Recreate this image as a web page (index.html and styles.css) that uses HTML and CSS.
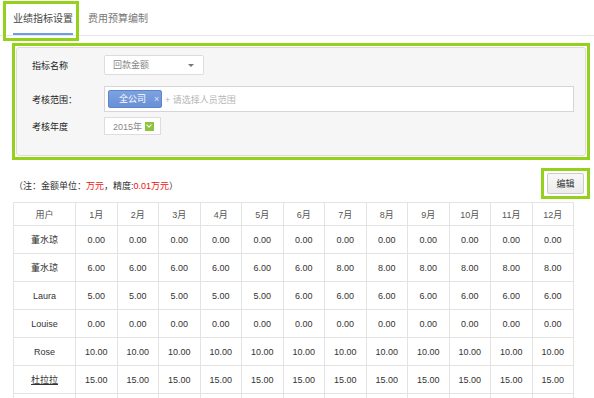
FILE: index.html
```html
<!DOCTYPE html>
<html lang="zh-CN">
<head>
    <meta charset="UTF-8">
    <title>业绩指标设置</title>
    <link rel="stylesheet" href="styles.css">
</head>
<body>
<div class="tabs">
    <span class="tab active">业绩指标设置</span>
    <span class="tab">费用预算编制</span>
    <div class="mark"></div>
</div>
<div class="filter">
    <div class="panel">
        <div class="row row1">
            <span class="label">指标名称</span>
            <div class="select">回款金额<i class="caret"></i></div>
        </div>
        <div class="row row2">
            <span class="label">考核范围：</span>
            <div class="tags">
                <span class="tag">全公司<i>×</i></span>
                <span class="holder">+ 请选择人员范围</span>
            </div>
        </div>
        <div class="row row3">
            <span class="label">考核年度</span>
            <div class="year">2015年<i class="down"></i></div>
        </div>
    </div>
</div>
<div class="bar">
    <p class="note">（注：金额单位：<em>万元</em>，精度:<em>0.01万元</em>）</p>
    <div class="editbox"><button class="btn">编辑</button></div>
</div>
<table>
    <tr class="head">
        <td>用户</td><td>1月</td><td>2月</td><td>3月</td><td>4月</td><td>5月</td><td>6月</td><td>7月</td><td>8月</td><td>9月</td><td>10月</td><td>11月</td><td>12月</td>
    </tr>
    <tr>
        <td>董水琼</td><td>0.00</td><td>0.00</td><td>0.00</td><td>0.00</td><td>0.00</td><td>0.00</td><td>0.00</td><td>0.00</td><td>0.00</td><td>0.00</td><td>0.00</td><td>0.00</td>
    </tr>
    <tr>
        <td>董水琼</td><td>6.00</td><td>6.00</td><td>6.00</td><td>6.00</td><td>6.00</td><td>6.00</td><td>8.00</td><td>8.00</td><td>8.00</td><td>8.00</td><td>8.00</td><td>8.00</td>
    </tr>
    <tr>
        <td>Laura</td><td>5.00</td><td>5.00</td><td>5.00</td><td>5.00</td><td>5.00</td><td>6.00</td><td>6.00</td><td>6.00</td><td>6.00</td><td>6.00</td><td>6.00</td><td>6.00</td>
    </tr>
    <tr>
        <td>Louise</td><td>0.00</td><td>0.00</td><td>0.00</td><td>0.00</td><td>0.00</td><td>0.00</td><td>0.00</td><td>0.00</td><td>0.00</td><td>0.00</td><td>0.00</td><td>0.00</td>
    </tr>
    <tr>
        <td>Rose</td><td>10.00</td><td>10.00</td><td>10.00</td><td>10.00</td><td>10.00</td><td>10.00</td><td>10.00</td><td>10.00</td><td>10.00</td><td>10.00</td><td>10.00</td><td>10.00</td>
    </tr>
    <tr>
        <td><a href="#">杜拉拉</a></td><td>15.00</td><td>15.00</td><td>15.00</td><td>15.00</td><td>15.00</td><td>15.00</td><td>15.00</td><td>15.00</td><td>15.00</td><td>15.00</td><td>15.00</td><td>15.00</td>
    </tr>
    <tr>
        <td></td><td></td><td></td><td></td><td></td><td></td><td></td><td></td><td></td><td></td><td></td><td></td><td></td>
    </tr>
</table>
</body>
</html>
```
FILE: styles.css
```css
body{
    margin: 0;
    width: 594px;
    font-family: "Liberation Sans", "Noto Sans CJK SC", sans-serif;
    font-size: 9px;
    color: #333333;
    background-color: #ffffff;
}
.tabs{
    position: relative;
    display: flex;
    gap: 15px;
    height: 35px;
    padding-left: 13px;
    border-bottom: 1px solid #e6e6e6;
}
.tab{
    box-sizing: border-box;
    height: 35px;
    padding-top: 4px;
    line-height: 29px;
    font-size: 10px;
    color: #777777;
    border-bottom: 2px solid transparent;
}
.tab.active{
    color: #444444;
    border-bottom-color: #6c9ee6;
}
.mark{
    position: absolute;
    left: 3px;
    top: 1px;
    width: 76px;
    height: 40px;
    box-sizing: border-box;
    border: 3px solid #93d11a;
}
.filter{
    margin: 7px 4px 0 12px;
    border: 3px solid #93d11a;
    padding: 1px;
}
.panel{
    height: 100px;
    padding: 7px 11px 0 15px;
    background-color: #f6f6f6;
    border: 1px solid #dcdcdc;
    border-radius: 3px;
}
.row{
    display: flex;
    align-items: center;
}
.row2{
    margin-top: 11px;
}
.row3{
    margin-top: 5px;
}
.label{
    width: 72px;
    color: #222222;
}
.select{
    position: relative;
    box-sizing: border-box;
    width: 100px;
    height: 20px;
    line-height: 18px;
    padding-left: 8px;
    background-color: #ffffff;
    border: 1px solid #dddddd;
    border-radius: 2px;
    color: #888888;
}
.caret{
    position: absolute;
    right: 9px;
    top: 8px;
    border-left: 3px solid transparent;
    border-right: 3px solid transparent;
    border-top: 3px solid #777777;
}
.tags{
    display: flex;
    align-items: center;
    box-sizing: border-box;
    width: 470px;
    height: 26px;
    padding-left: 3px;
    background-color: #ffffff;
    border: 1px solid #d6d6d6;
}
.tag{
    box-sizing: border-box;
    width: 54px;
    height: 18px;
    line-height: 16px;
    padding-left: 10px;
    color: #ffffff;
    background: linear-gradient(#7ea2e0, #6890d6);
    border: 1px solid #5b84cc;
    border-radius: 2px;
}
.tag i{
    font-style: normal;
    margin-left: 8px;
    color: #dce6f7;
}
.holder{
    margin-left: 3px;
    color: #b5b5b5;
}
.year{
    display: flex;
    align-items: center;
    box-sizing: border-box;
    width: 57px;
    height: 18px;
    padding-left: 8px;
    background-color: #ffffff;
    border: 1px solid #dddddd;
    color: #888888;
}
.down{
    position: relative;
    width: 9px;
    height: 9px;
    margin-left: 3px;
    background-color: #8cc43c;
}
.down::after{
    content: "";
    position: absolute;
    left: 2px;
    top: 1px;
    width: 3px;
    height: 3px;
    border-right: 1.5px solid #ffffff;
    border-bottom: 1.5px solid #ffffff;
    transform: rotate(45deg);
}
.bar{
    display: flex;
    justify-content: space-between;
    align-items: center;
    margin: 8px 4px 0 14px;
}
.note{
    margin: 3px 0 0 0;
}
.note em{
    font-style: normal;
    color: #ee1111;
}
.editbox{
    border: 3px solid #93d11a;
    padding: 2px 3px;
}
.btn{
    display: block;
    width: 37px;
    height: 21px;
    padding: 0;
    font-family: inherit;
    font-size: 9px;
    color: #333333;
    background: linear-gradient(#f8f8f8, #ececec);
    border: 1px solid #cccccc;
    border-radius: 2px;
}
table{
    margin: 3px 0 0 13px;
    width: 561px;
    border-collapse: collapse;
    table-layout: fixed;
}
td{
    height: 27px;
    padding: 0;
    border: 1px solid #e3e3e3;
    text-align: center;
    color: #333333;
}
td:first-child{
    width: 61px;
}
.head td{
    height: 22px;
    color: #555555;
}
td a{
    color: #333333;
}
```
